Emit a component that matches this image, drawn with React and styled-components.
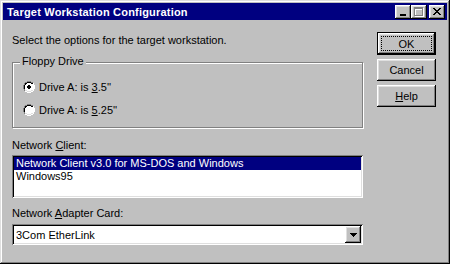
import React from "react";
import styled, { createGlobalStyle } from "styled-components";

const GlobalStyle = createGlobalStyle`
  html, body {
    margin: 0;
    padding: 0;
    background: #c0c0c0;
  }
  body {
    font-family: "Liberation Sans", Arial, sans-serif;
    font-size: 11px;
    color: #000;
  }
`;

const raised = `
  box-shadow:
    inset -1px -1px 0 #000,
    inset 1px 1px 0 #fff,
    inset -2px -2px 0 #808080,
    inset 2px 2px 0 #dfdfdf;
`;

const sunken = `
  box-shadow:
    inset 1px 1px 0 #808080,
    inset -1px -1px 0 #fff,
    inset 2px 2px 0 #000,
    inset -2px -2px 0 #dfdfdf;
`;

const Window = styled.div`
  width: 450px;
  height: 264px;
  box-sizing: border-box;
  padding: 3px;
  background: #c0c0c0;
  box-shadow:
    inset -1px -1px 0 #000,
    inset 1px 1px 0 #dfdfdf,
    inset -2px -2px 0 #808080,
    inset 2px 2px 0 #fff;
  display: flex;
  flex-direction: column;
`;

const TitleBar = styled.div`
  height: 17px;
  background: #000080;
  display: flex;
  align-items: center;
  padding: 0 2px 0 4px;
`;

const Title = styled.div`
  flex: 1;
  color: #fff;
  font-weight: bold;
  font-size: 11px;
  letter-spacing: 0.2px;
`;

const TitleButtons = styled.div`
  display: flex;
  align-items: center;
`;

const TitleButton = styled.div`
  width: 16px;
  height: 14px;
  background: #c0c0c0;
  margin-left: ${(p) => (p.$gap ? "2px" : "0")};
  display: flex;
  align-items: center;
  justify-content: center;
  ${raised}
`;

const Body = styled.div`
  flex: 1;
  display: flex;
  padding: 14px 11px 0 9px;
`;

const Main = styled.div`
  width: 351px;
  display: flex;
  flex-direction: column;
`;

const Intro = styled.div`
  line-height: 13px;
  height: 13px;
`;

const Group = styled.div`
  position: relative;
  margin-top: 15px;
  height: 66px;
  box-sizing: border-box;
  border: 1px solid #808080;
  box-shadow: 1px 1px 0 #fff, inset 1px 1px 0 #fff;
  padding: 15px 0 0 10px;
  display: flex;
  flex-direction: column;
  gap: 6px;
`;

const Legend = styled.span`
  position: absolute;
  top: -8px;
  left: 7px;
  padding: 0 2px;
  background: #c0c0c0;
  line-height: 13px;
`;

const RadioRow = styled.label`
  display: flex;
  align-items: center;
  height: 17px;
  gap: 4px;
`;

const FieldLabel = styled.div`
  margin-top: ${(p) => p.$top}px;
  line-height: 13px;
`;

const ListBox = styled.div`
  margin-top: 3px;
  height: 43px;
  background: #fff;
  box-sizing: border-box;
  padding: 2px;
  ${sunken}
`;

const ListItem = styled.div`
  height: 13px;
  line-height: 13px;
  padding-left: 2px;
  background: ${(p) => (p.$selected ? "#000080" : "transparent")};
  color: ${(p) => (p.$selected ? "#fff" : "#000")};
`;

const Combo = styled.div`
  margin-top: 4px;
  height: 21px;
  background: #fff;
  box-sizing: border-box;
  padding: 2px;
  display: flex;
  align-items: center;
  ${sunken}
`;

const ComboText = styled.div`
  flex: 1;
  padding-left: 2px;
`;

const DropButton = styled.div`
  width: 16px;
  height: 17px;
  background: #c0c0c0;
  display: flex;
  align-items: center;
  justify-content: center;
  ${raised}
`;

const Buttons = styled.div`
  margin-left: 14px;
  margin-top: -2px;
  width: 59px;
  display: flex;
  flex-direction: column;
  gap: 4px;
`;

const Button = styled.div`
  height: ${(p) => (p.$default ? 23 : 22)}px;
  box-sizing: border-box;
  background: #c0c0c0;
  display: flex;
  align-items: center;
  justify-content: center;
  position: relative;
  ${(p) =>
    p.$default
      ? `border: 1px solid #000;
         box-shadow:
           inset -1px -1px 0 #000,
           inset 1px 1px 0 #fff,
           inset -2px -2px 0 #808080,
           inset 2px 2px 0 #dfdfdf;`
      : raised}
`;

const Focus = styled.span`
  position: absolute;
  inset: 3px;
  border: 1px dotted #000;
`;

const Radio = ({ checked }) => (
  <svg width="12" height="12" viewBox="0 0 12 12" shapeRendering="crispEdges">
    <path d="M4 0h4v1H4zM2 1h2v1H2zM8 1h2v1H8zM1 2h1v2H1zM0 4h1v4H0zM1 8h1v2H1z" fill="#808080" />
    <path d="M10 2h1v2h-1zM11 4h1v4h-1zM10 8h1v2h-1zM8 10h2v1H8zM2 10h2v1H2zM4 11h4v1H4z" fill="#fff" />
    <path d="M4 1h4v1H4zM2 2h2v1H2zM8 2h2v1H8zM1 4h1v4H1zM2 3h1v1H2zM2 8h1v1H2z" fill="#000" />
    <path d="M9 3h1v1H9zM10 4h1v4h-1zM9 8h1v1H9zM8 9h2v1H8zM2 9h2v1H2zM4 10h4v1H4z" fill="#dfdfdf" />
    <path d="M4 2h4v1h2v1h1v4h-1v1H8v1H4V9H2V8H2V4h1V3h1z" fill="#fff" />
    {checked && <path d="M5 4h2v1h1v2H7v1H5V7H4V5h1z" fill="#000" />}
  </svg>
);

const MinIcon = () => (
  <svg width="8" height="8" viewBox="0 0 8 8" shapeRendering="crispEdges">
    <rect x="1" y="6" width="6" height="2" fill="#000" />
  </svg>
);

const MaxIcon = () => (
  <svg width="10" height="10" viewBox="0 0 10 10" shapeRendering="crispEdges">
    <path d="M1 1h9v9H1z M2 3h7v6H2z" fill="#fff" fillRule="evenodd" />
    <path d="M0 0h9v9H0z M1 2h7v6H1z" fill="#808080" fillRule="evenodd" />
  </svg>
);

const CloseIcon = () => (
  <svg width="8" height="7" viewBox="0 0 8 7" shapeRendering="crispEdges">
    <path
      d="M0 0h2v1h1v1h2V1h1V0h2v1H7v1H6v1H5v1h1v1h1v1h1v1H6V6H5V5H3v1H2v1H0V6h1V5h1V4h1V3H2V2H1V1H0z"
      fill="#000"
    />
  </svg>
);

const DownArrow = () => (
  <svg width="7" height="4" viewBox="0 0 7 4" shapeRendering="crispEdges">
    <path d="M0 0h7v1H6v1H5v1H4v1H3V3H2V2H1V1H0z" fill="#000" />
  </svg>
);

export default function App() {
  return (
    <>
      <GlobalStyle />
      <Window>
        <TitleBar>
          <Title>Target Workstation Configuration</Title>
          <TitleButtons>
            <TitleButton>
              <MinIcon />
            </TitleButton>
            <TitleButton>
              <MaxIcon />
            </TitleButton>
            <TitleButton $gap>
              <CloseIcon />
            </TitleButton>
          </TitleButtons>
        </TitleBar>
        <Body>
          <Main>
            <Intro>Select the options for the target workstation.</Intro>
            <Group>
              <Legend>Floppy Drive</Legend>
              <RadioRow>
                <Radio checked />
                <span>
                  Drive A: is <u>3</u>.5''
                </span>
              </RadioRow>
              <RadioRow>
                <Radio />
                <span>
                  Drive A: is <u>5</u>.25''
                </span>
              </RadioRow>
            </Group>
            <FieldLabel $top={11}>
              Network <u>C</u>lient:
            </FieldLabel>
            <ListBox>
              <ListItem $selected>Network Client v3.0 for MS-DOS and Windows</ListItem>
              <ListItem>Windows95</ListItem>
            </ListBox>
            <FieldLabel $top={9}>
              Network <u>A</u>dapter Card:
            </FieldLabel>
            <Combo>
              <ComboText>3Com EtherLink</ComboText>
              <DropButton>
                <DownArrow />
              </DropButton>
            </Combo>
          </Main>
          <Buttons>
            <Button $default>
              <Focus />
              OK
            </Button>
            <Button>Cancel</Button>
            <Button>
              <u>H</u>elp
            </Button>
          </Buttons>
        </Body>
      </Window>
    </>
  );
}
